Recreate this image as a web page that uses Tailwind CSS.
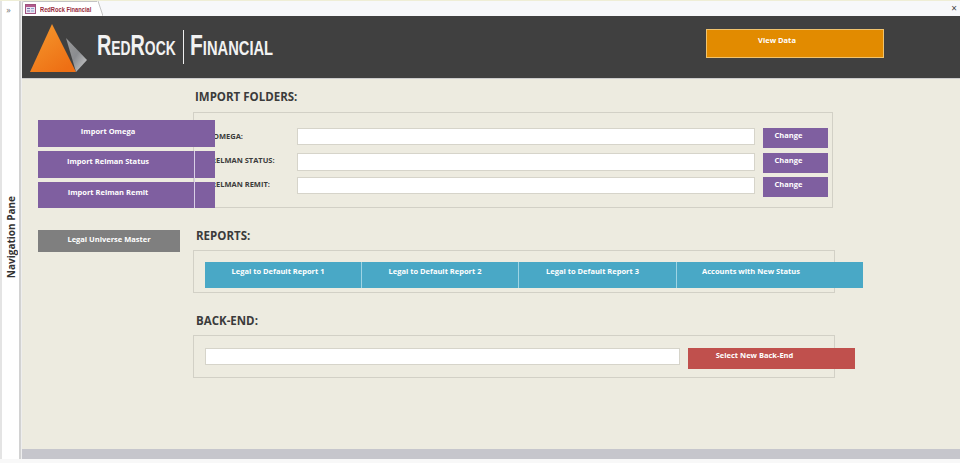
<!DOCTYPE html>
<html lang="en">
<head>
  <meta charset="UTF-8" />
  <title>RedRock Financial</title>
  <script src="https://cdn.jsdelivr.net/npm/@tailwindcss/browser@4"></script>
</head>
<body class="bg-white font-['Open_Sans',sans-serif]">
  <div class="w-[960px] h-[463px] overflow-hidden flex flex-col bg-[#f8f8f8]">
    <div class="h-px bg-[#efeed6] shrink-0"></div>
    <div class="flex h-[458px] shrink-0">

      <!-- nav pane -->
      <div class="w-[22px] shrink-0 flex">
        <div class="w-[2px] bg-[#e4e4e4]"></div>
        <div class="w-[17px] bg-white flex flex-col items-center relative">
          <span class="text-[9px] leading-none text-[#777] font-normal mt-[4px] -ml-[4px]">»</span>
          <div class="flex-1 flex items-center justify-center pt-[2px]">
            <span class="[writing-mode:vertical-rl] rotate-180 text-[10px] leading-none font-bold text-[#333] whitespace-nowrap">Navigation Pane</span>
          </div>
        </div>
        <div class="w-[3px] bg-[#d2d2d2] border-r border-[#eee]"></div>
      </div>

      <div class="flex-1 flex flex-col min-w-0">
        <!-- tab strip -->
        <div class="h-[15px] bg-[#f7f8fa] flex items-stretch justify-between shrink-0">
          <div class="flex">
            <div class="w-[76px] bg-white border-l border-t border-[#c4c4c4] rounded-tl-[2px] flex items-center pl-[2px] gap-[4px]">
              <svg class="w-[11px] h-[10px] shrink-0" viewBox="0 0 11 10">
                <rect x="0.5" y="0.5" width="10" height="9" fill="#e8e4f2" stroke="#a0527e" />
                <rect x="1" y="1" width="9" height="2" fill="#b45a8c" />
                <rect x="2" y="4" width="3" height="1" fill="#7b6fa8" />
                <rect x="6" y="4" width="3" height="1" fill="#8fa4cc" />
                <rect x="2" y="6.500" width="3" height="1" fill="#7b6fa8" />
                <rect x="6" y="6.500" width="3" height="1" fill="#8fa4cc" />
              </svg>
              <span class="w-[55px] text-[7px] leading-none font-bold text-[#9a2c3c] whitespace-nowrap font-['Liberation_Sans',sans-serif] origin-left scale-x-[0.82] inline-block">RedRock Financial</span>
            </div>
            <svg class="w-[6px] h-[15px] -ml-px" viewBox="0 0 6 15">
              <path d="M0 0 L1 0 L6 15 L0 15 Z" fill="#fff" />
              <path d="M1 0 L6 15" stroke="#c4c4c4" fill="none" />
            </svg>
          </div>
          <span class="text-[10px] leading-[15px] text-[#444] pr-[3px]">×</span>
        </div>

        <!-- header -->
        <div class="h-[63px] bg-[#404040] shrink-0 flex items-center justify-between border-b border-[#ccc] pl-[8px] pr-[76px]">
          <div class="flex items-center">
            <svg class="w-[58px] h-[49px] shrink-0 mt-[2px]" viewBox="0 0 58 49">
              <defs>
                <linearGradient id="rock" x1="0" y1="0" x2="0.7" y2="1">
                  <stop offset="0" stop-color="#f59a2e" />
                  <stop offset="1" stop-color="#ee6f14" />
                </linearGradient>
                <linearGradient id="shard" x1="0" y1="0" x2="1" y2="1">
                  <stop offset="0" stop-color="#9a9a9a" />
                  <stop offset="0.5" stop-color="#8a8c90" />
                  <stop offset="1" stop-color="#d0d0d0" />
                </linearGradient>
              </defs>
              <path d="M22 0 L0 48 L46 48 Z" fill="url(#rock)" />
              <path d="M36 14 L57 36 L46 48 Z" fill="url(#shard)" />
            </svg>
            <div class="flex items-center ml-[9px] text-[#f2f2f2]">
              <span class="w-[79px] pb-[4px] text-[30px] leading-none font-bold whitespace-nowrap [font-family:'Liberation_Sans',sans-serif] [font-variant:small-caps] origin-left scale-x-[0.66] inline-block">RedRock</span>
              <span class="w-px h-[34px] bg-[#eee] ml-[7px]"></span>
              <span class="w-[82px] pb-[4px] ml-[6px] text-[30px] leading-none font-bold whitespace-nowrap [font-family:'Liberation_Sans',sans-serif] [font-variant:small-caps] origin-left scale-x-[0.7] inline-block">Financial</span>
            </div>
          </div>
          <button class="w-[178px] h-[29px] -mt-[8px] bg-[#e28b00] border border-[#f0c36e] text-white text-[7.500px] font-bold pr-[36px] pb-[5px]">View Data</button>
        </div>

        <!-- form body -->
        <div class="flex-1 bg-[#edebe0] flex min-h-0">
          <div class="w-[171px] shrink-0 pl-[16px] pt-[41px] relative z-10 flex flex-col">
            <button class="w-[177px] h-[27px] shrink-0 bg-[#7f5fa0] text-white text-[7.500px] font-bold pr-[37px] pb-[4px]">Import Omega</button>
            <button class="w-[177px] h-[27px] shrink-0 mt-[4px] bg-[#7f5fa0] text-white text-[7.500px] font-bold pr-[37px] pb-[6px]">Import Relman Status</button>
            <button class="w-[177px] h-[26px] shrink-0 mt-[4px] bg-[#7f5fa0] text-white text-[7.500px] font-bold pr-[37px] pb-[5px]">Import Relman Remit</button>
            <button class="w-[142px] h-[22px] shrink-0 mt-[22px] bg-[#7f7f7f] text-white text-[7.500px] font-bold pb-[2px]">Legal Universe Master</button>
            <!-- frame edge showing through the wide buttons -->
            <div class="absolute left-[172px] top-[72px] w-px h-[57px] bg-[#d9cfe6]"></div>
          </div>

          <div class="flex-1 min-w-0 flex flex-col">
            <h2 class="text-[11.500px] leading-[16px] font-bold text-[#3b3b3b] ml-[2px] mt-[10px]">IMPORT FOLDERS:</h2>
            <div class="w-[640px] h-[96px] mt-[7px] border border-[#d2d0c6] flex flex-col pt-[15px] pl-[17px] gap-[4px]">
              <div class="flex items-start h-[21px]">
                <span class="w-[86px] shrink-0 text-[7.500px] leading-[17px] font-bold text-[#3b3b3b] pl-[2px]">OMEGA:</span>
                <div class="w-[458px] h-[17px] shrink-0 bg-white border border-[#d6d4ca]"></div>
                <button class="w-[65px] h-[20px] ml-[8px] bg-[#7f5fa0] text-white text-[7.500px] font-bold pr-[14px] pb-[5px]">Change</button>
              </div>
              <div class="flex items-start h-[20px]">
                <span class="w-[86px] shrink-0 text-[7.500px] leading-[15px] font-bold text-[#3b3b3b]">RELMAN STATUS:</span>
                <div class="w-[458px] h-[18px] shrink-0 bg-white border border-[#d6d4ca]"></div>
                <button class="w-[65px] h-[20px] ml-[8px] bg-[#7f5fa0] text-white text-[7.500px] font-bold pr-[14px] pb-[5px]">Change</button>
              </div>
              <div class="flex items-start h-[20px]">
                <span class="w-[86px] shrink-0 text-[7.500px] leading-[15px] font-bold text-[#3b3b3b]">RELMAN REMIT:</span>
                <div class="w-[458px] h-[17px] shrink-0 bg-white border border-[#d6d4ca]"></div>
                <button class="w-[65px] h-[20px] ml-[8px] bg-[#7f5fa0] text-white text-[7.500px] font-bold pr-[14px] pb-[5px]">Change</button>
              </div>
            </div>

            <h2 class="text-[11.500px] leading-[16px] font-bold text-[#3b3b3b] ml-[3px] mt-[20px]">REPORTS:</h2>
            <div class="w-[642px] h-[43px] mt-[6px] border border-[#d2d0c6] pl-[11px] pt-[11px]">
              <div class="flex w-[658px] h-[26px] text-white text-[7.500px] font-bold">
                <button class="w-[157px] bg-[#49a8c6] border-r border-[#9ed4e4] pr-[10px] pb-[6px]">Legal to Default Report 1</button>
                <button class="w-[157px] bg-[#49a8c6] border-r border-[#9ed4e4] pr-[10px] pb-[6px]">Legal to Default Report 2</button>
                <button class="w-[158px] bg-[#49a8c6] border-r border-[#9ed4e4] pr-[10px] pb-[6px]">Legal to Default Report 3</button>
                <button class="w-[186px] bg-[#49a8c6] pr-[38px] pb-[6px]">Accounts with New Status</button>
              </div>
            </div>

            <h2 class="text-[11.500px] leading-[16px] font-bold text-[#3b3b3b] ml-[3px] mt-[20px]">BACK-END:</h2>
            <div class="w-[642px] h-[43px] mt-[6px] border border-[#d2d0c6] pl-[11px] pt-[12px] flex items-start">
              <div class="w-[475px] h-[17px] shrink-0 bg-white border border-[#d6d4ca]"></div>
              <button class="w-[167px] h-[21px] shrink-0 ml-[8px] bg-[#c0504d] text-white text-[7.500px] font-bold pr-[34px] pb-[5px]">Select New Back-End</button>
            </div>
          </div>
        </div>

        <!-- scroll bar strip -->
        <div class="h-[10px] bg-[#c6c6cc] shrink-0"></div>
      </div>
    </div>
  </div>
</body>
</html>
